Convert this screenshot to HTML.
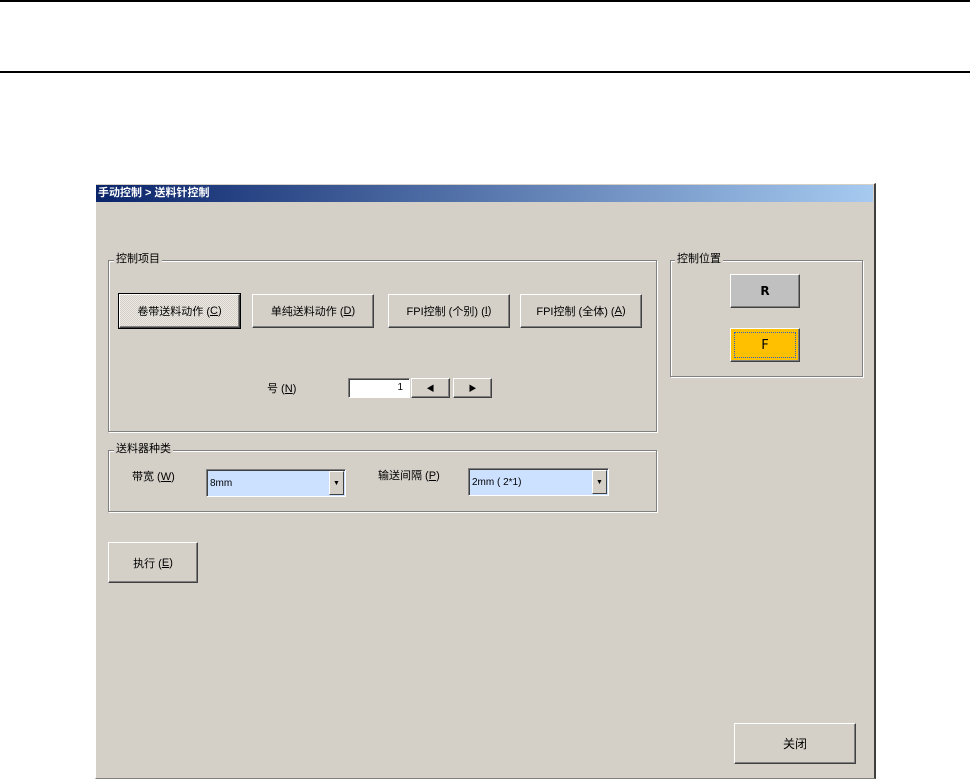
<!DOCTYPE html>
<html><head><meta charset="utf-8"><style>
*{margin:0;padding:0;box-sizing:border-box}
body{width:970px;height:779px;background:#fff;position:relative;overflow:hidden;font-family:"Liberation Sans","Noto Sans CJK SC","WenQuanYi Zen Hei",sans-serif;font-size:11px;color:#000}
.a{position:absolute}
.line{position:absolute;left:0;width:970px;height:2px;background:#000}
.win{left:95px;top:183px;width:781px;height:596px;background:#d4d0c8;border-top:1px solid #fff;border-left:1px solid #fff;border-right:2px solid #404040;border-bottom:1px solid #808080}
.title{left:96px;top:185px;width:777px;height:17px;background:linear-gradient(to right,#0a246a,#a6caf0);color:#fff;font-weight:bold;font-size:11px;line-height:17px;padding-left:2px}
.grp{border:1px solid #808080;box-shadow:1px 1px 0 #fff, inset 1px 1px 0 #fff}
.lbl{background:#d4d0c8;padding:0 2px;line-height:12px}
.btn{background:#d4d0c8;border:1px solid;border-color:#fff #404040 #404040 #fff;box-shadow:inset -1px -1px 0 #808080;display:flex;align-items:center;justify-content:center;font-size:11px}
.btn.def{outline:1px solid #000}
.cb{background:#cce0ff;border:1px solid;border-color:#808080 #fff #fff #808080;box-shadow:inset 1px 1px 0 #404040;font-size:10px;padding:8px 0 0 3px}
.arr{position:absolute;right:1px;top:1px;bottom:1px;width:15px;background:#d4d0c8;border:1px solid;border-color:#fff #404040 #404040 #fff;font-size:7px;display:flex;align-items:center;justify-content:center}
</style></head><body>
<div class="line" style="top:0"></div>
<div class="line" style="top:71px"></div>
<div class="a win"></div>
<div class="a title">手动控制 &gt; 送料针控制</div>

<div class="a grp" style="left:108px;top:260px;width:549px;height:172px"></div>
<div class="a lbl" style="left:114px;top:253px">控制项目</div>
<div class="a btn def" style="left:119px;top:294px;width:121px;height:34px;background:repeating-conic-gradient(#d4d0c8 0 25%,#ece9e4 0 50%) 0 0/2px 2px">卷带送料动作 (<u>C</u>)</div>
<div class="a btn" style="left:252px;top:294px;width:122px;height:34px">单纯送料动作 (<u>D</u>)</div>
<div class="a btn" style="left:388px;top:294px;width:122px;height:34px">FPI控制 (个别) (<u>I</u>)</div>
<div class="a btn" style="left:520px;top:294px;width:122px;height:34px">FPI控制 (全体) (<u>A</u>)</div>
<div class="a" style="left:267px;top:380px">号 (<u>N</u>)</div>
<div class="a" style="left:348px;top:378px;width:62px;height:20px;background:#fff;border:1px solid;border-color:#808080 #fff #fff #808080;box-shadow:inset 1px 1px 0 #404040;text-align:right;padding:3px 6px 0 0;font-size:10px">1</div>
<div class="a btn" style="left:411px;top:378px;width:39px;height:20px;font-size:8px">◀</div>
<div class="a btn" style="left:453px;top:378px;width:39px;height:20px;font-size:8px">▶</div>

<div class="a grp" style="left:108px;top:450px;width:549px;height:62px"></div>
<div class="a lbl" style="left:114px;top:443px">送料器种类</div>
<div class="a" style="left:132px;top:468px">带宽 (<u>W</u>)</div>
<div class="a cb" style="left:206px;top:469px;width:140px;height:28px">8mm<div class="arr">▼</div></div>
<div class="a" style="left:378px;top:467px">输送间隔 (<u>P</u>)</div>
<div class="a cb" style="left:468px;top:468px;width:141px;height:28px">2mm ( 2*1)<div class="arr">▼</div></div>

<div class="a btn" style="left:108px;top:542px;width:90px;height:41px">执行 (<u>E</u>)</div>

<div class="a grp" style="left:670px;top:260px;width:193px;height:117px"></div>
<div class="a lbl" style="left:675px;top:253px">控制位置</div>
<div class="a btn" style="left:730px;top:274px;width:70px;height:34px;background:#c0c0c0;font-weight:bold;font-size:12px;font-family:'DejaVu Sans',sans-serif">R</div>
<div class="a btn" style="left:730px;top:328px;width:70px;height:34px;background:#ffc000;font-size:13px;font-family:'DejaVu Sans',sans-serif"><div style="position:absolute;left:3px;top:3px;right:3px;bottom:3px;border:1px dotted #3060c0"></div>F</div>

<div class="a btn" style="left:734px;top:723px;width:122px;height:41px;font-size:12px">关闭</div>
</body></html>
